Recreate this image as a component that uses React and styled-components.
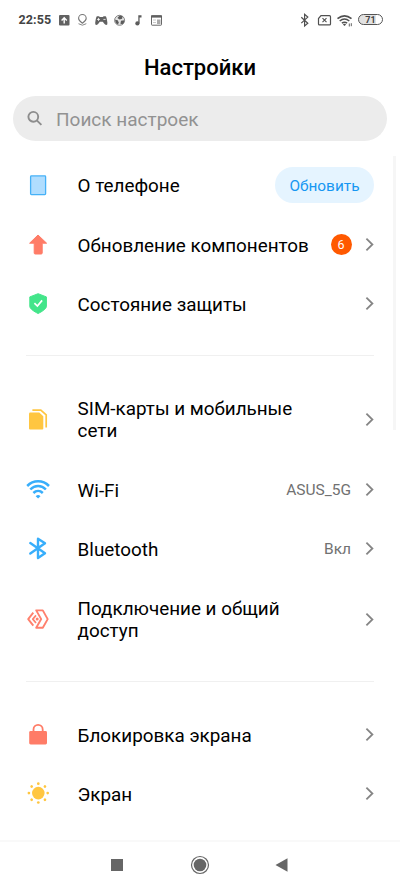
import React from 'react';
import styled, { createGlobalStyle } from 'styled-components';

const GlobalStyle = createGlobalStyle`
  * { box-sizing: border-box; }
  body { margin: 0; background: #fff; font-family: Roboto, sans-serif; color: #000; }
  svg { display: block; flex: none; }
`;

const Screen = styled.div`
  position: relative;
  display: flex;
  flex-direction: column;
  width: 400px;
  height: 889px;
  overflow: hidden;
  background: #fff;
`;

const StatusBar = styled.header`
  display: flex;
  align-items: center;
  justify-content: space-between;
  height: 39px;
  padding: 0 17px 0 18.5px;
  flex: none;
`;

const StatusGroup = styled.div`
  display: flex;
  align-items: center;
`;

const Clock = styled.span`
  width: 39.5px;
  font-size: 12.5px;
  font-weight: 700;
  line-height: 15px;
  letter-spacing: 0.1px;
  color: #444;
`;

const Battery = styled.span`
  display: flex;
  align-items: center;
  justify-content: center;
  width: 25px;
  height: 11px;
  margin-left: 5px;
  padding-top: 1px;
  border: 1px solid #555;
  border-radius: 6px;
  background: linear-gradient(90deg, #e2e2e2 72%, #fff 72%);
  font-size: 9px;
  font-weight: 700;
  line-height: 9px;
  color: #444;
`;

const Title = styled.h1`
  margin: 14px 0 0;
  height: 30px;
  font-size: 22px;
  font-weight: 500;
  line-height: 30px;
  text-align: center;
  flex: none;
`;

const SearchBar = styled.div`
  display: flex;
  align-items: center;
  height: 45px;
  margin: 13px 13px 15px;
  padding-left: 13px;
  gap: 13px;
  border-radius: 23px;
  background: #ececec;
  color: #929292;
  font-size: 19px;
  line-height: 24px;
  flex: none;
`;

const Placeholder = styled.span`
  padding-top: 2px;
`;

const Section = styled.section`
  display: flex;
  flex-direction: column;
  flex: none;
`;

const Divider = styled.div`
  height: 1px;
  margin: ${(p) => p.$before}px 26px ${(p) => p.$after}px;
  background: #f0f0f0;
  flex: none;
`;

const Row = styled.div`
  display: flex;
  align-items: center;
  height: ${(p) => p.$height || 59}px;
  padding: 0 26px 0 24px;
`;

const Label = styled.div`
  flex: 1;
  margin-left: 24.6px;
  padding-top: ${(p) => (p.$raised ? 1 : 2)}px;
  font-size: 18.85px;
  line-height: 22px;
  white-space: pre-line;
`;

const Value = styled.span`
  padding-top: 1px;
  margin-right: 14px;
  font-size: 15.5px;
  line-height: 20px;
  color: #717171;
`;

const Badge = styled.span`
  display: flex;
  align-items: center;
  justify-content: center;
  width: 21px;
  height: 21px;
  margin-right: 13.5px;
  border-radius: 50%;
  background: #ff5900;
  color: #fff;
  font-size: 12.5px;
`;

const UpdateButton = styled.button`
  width: 99px;
  height: 36px;
  margin-bottom: 1px;
  padding: 1px 0 0;
  border: 0;
  border-radius: 18px;
  background: #e5f4ff;
  color: #1697f2;
  font-family: inherit;
  font-size: 15.4px;
`;

const ScrollThumb = styled.div`
  position: absolute;
  top: 156px;
  right: 4px;
  width: 3px;
  height: 274px;
  background: #f6f6f6;
`;

const NavBar = styled.nav`
  display: flex;
  justify-content: center;
  align-items: center;
  gap: 62px;
  height: 49px;
  margin-top: auto;
  padding-bottom: 2px;
  border-top: 2px solid #f9f9f9;
  background: #fff;
  flex: none;
`;

const Chevron = () => (
  <svg width="9" height="15" viewBox="0 0 9 15" fill="none" stroke="#858585" strokeWidth="1.8">
    <path d="M1.4 1.6 7.4 7.5 1.4 13.4" />
  </svg>
);

const Icon = ({ children }) => (
  <svg width="29" height="29" viewBox="0 0 29 29" fill="none">{children}</svg>
);

const icons = {
  phone: (
    <Icon><rect x="6.6" y="4.9" width="15" height="18.7" rx="0.8" fill="#b0ddfe" stroke="#45b1f7" strokeWidth="1.3" /></Icon>
  ),
  update: (
    <Icon><path d="M14 5 22.6 13.2H18.2V23q0 1-1 1h-6q-1 0-1-1V13.2H5.6Z" fill="#ff7c67" stroke="#ff7c67" strokeWidth="1" strokeLinejoin="round" /></Icon>
  ),
  shield: (
    <Icon>
      <path d="M14.1 4.7 22.4 7.9v9.4c0 2.6-4.6 5.4-8.3 7.2-3.7-1.8-8.3-4.6-8.3-7.2V7.9Z" fill="#43e58a" stroke="#43e58a" strokeLinejoin="round" />
      <path d="m10.4 14.1 3 3 4.7-5.7" stroke="#fff" strokeWidth="1.7" />
    </Icon>
  ),
  sim: (
    <Icon>
      <path d="M5 8.700q0-1.200 1.200-1.200H15.300L19.300 11.300V23.500q0 1-1 1H6q-1 0-1-1Z" fill="#ffc641" />
      <path d="M8.400 5.100H16.800L22.200 9.900V22.500" stroke="#ffc641" strokeWidth="1.700" />
    </Icon>
  ),
  wifi: (
    <Icon>
      <g stroke="#38aefb" strokeWidth="2.500">
        <path d="M3.200 11C9.300 4.800 18.900 4.800 25 11" />
        <path d="M6.300 14.500c4.500-4.600 11.100-4.600 15.600 0" />
        <path d="M9.400 18c2.700-2.600 6.700-2.600 9.400 0" />
      </g>
      <path d="M11.700 21.200q2.400-2.200 4.800 0l-2.400 2.300Z" fill="#38aefb" />
    </Icon>
  ),
  bluetooth: (
    <Icon>
      <path d="M6.300 9.100 21 19.200 14 24V4.700l7 4.600L6.300 19.600" stroke="#38aefb" strokeWidth="2.400" strokeLinejoin="round" strokeLinecap="round" />
    </Icon>
  ),
  share: (
    <Icon>
      <g stroke="#ff806d" strokeWidth="1.900" strokeLinejoin="round">
        <path d="M12.200 5.400h6.600l4.900 8.700-4.900 8.600h-6.600l5-8.600Z" />
        <path d="M9.300 7.700 4.200 14.100l5.100 6.500" />
        <path d="m12 10.400-3.200 3.700 3.200 3.900" strokeWidth="1.700" />
      </g>
      <circle cx="13.200" cy="14.100" r="1.500" fill="#ff806d" />
    </Icon>
  ),
  lock: (
    <Icon>
      <rect x="5.200" y="11" width="17.800" height="13.500" rx="1.400" fill="#ff7c67" />
      <path d="M9.500 12.500V9.400a4.600 4.600 0 0 1 9.200 0v3.100" stroke="#ff7c67" strokeWidth="1.800" />
    </Icon>
  ),
  sun: (
    <Icon>
      <g fill="#ffc641">
        <circle cx="14.300" cy="14.100" r="6.300" />
        {[0, 45, 90, 135, 180, 225, 270, 315].map((a) => (
          <circle key={a} cx="14.300" cy="4.700" r="1.350" transform={`rotate(${a} 14.3 14.1)`} />
        ))}
      </g>
    </Icon>
  ),
};

const SettingRow = ({ icon, label, height, raised, children, arrow = true }) => (
  <Row $height={height}>
    {icons[icon]}
    <Label $raised={raised}>{label}</Label>
    {children}
    {arrow && <Chevron />}
  </Row>
);

const NotificationIcons = () => (
  <svg width="106" height="14" viewBox="58 12 106 14" fill="none">
    <rect x="59" y="14" width="10.5" height="10.5" rx="1" fill="#626262" />
    <path d="M64.2 22.5V17m-2.6 2.4 2.6-2.6 2.6 2.6" stroke="#fff" strokeWidth="1.4" />
    <path d="M82.4 22.2c-2.1-1.3-3.8-2.900-3.800-4.900a3.800 3.800 0 0 1 7.600 0c0 2-1.700 3.600-3.800 4.900Z" stroke="#777" strokeWidth="1.100" />
    <path d="M78.500 22.700q3.900 3 7.800 0" stroke="#888" />
    <path d="M97 15.200h2l.8.8h3l.8-.8h2q1.100.5 1.800 6.600.3 2.200-1.200 2.200-1 0-3.400-3.200h-3Q97.500 24 96.400 24q-1.500 0-1.200-2.200.7-6.100 1.800-6.600Z" fill="#626262" />
    <path d="M97 18.400h3m-1.500-1.500v3M103.400 18.400h2.200" stroke="#fff" strokeWidth=".8" />
    <circle cx="119.600" cy="19.300" r="5" fill="#e3e3e3" stroke="#858585" />
    <path d="m119.600 14.500 3 .7-.5 2.600-2.500.8-2.200-1.700ZM115 18.800l2.700.5 1.200 2.500-1.200 1.800q-2.500-1.400-2.700-4.800ZM121 19.800l3.400-.6q0 2.700-2 4.100l-2-.6Z" fill="#5c5c5c" />
    <path d="M138.300 22.400V14.200h3.200v2.300h-1.900v5.900Z" fill="#5c5c5c" />
    <circle cx="137.400" cy="22.400" r="2.100" fill="#5c5c5c" />
    <rect x="151.500" y="14.700" width="10" height="9.500" rx=".6" stroke="#686868" />
    <path d="M151 15.500h11" stroke="#606060" strokeWidth="2.200" />
    <path d="M153 19h3M153 21.500h3" stroke="#bbb" strokeWidth=".8" />
    <path d="M157 18.500h3.500v4.500H157Z" fill="#aaa" />
  </svg>
);

const ConnectivityIcons = () => (
  <svg width="53" height="16" viewBox="300 11 53 16" fill="none" stroke="#505050">
    <path d="m301.300 16.300 6.500 5.900-3.200 2.800V13.300l3.200 2.800-6.500 6" strokeWidth="1.200" />
    <path d="M321 14.700h8.500q1 0 1 1v7.200q0 1-1 1h-10q-1 0-1-1v-5.400Z" strokeWidth="1.200" />
    <path d="m322.500 17.200 4 4m0-4-4 4" strokeWidth="1.100" />
    <path d="M337.500 17.700q7-5.800 14 0M339.700 20q4.800-4 9.600 0M341.900 22.200q2.600-2 5.200 0" strokeWidth="1.600" />
    <path d="m342.900 23.400 1.600 1.600 1.600-1.600q-1.600-1.200-3.200 0Z" fill="#505050" stroke="none" />
    <path d="M349.300 22.500v3m2-3.300v3" strokeWidth=".9" />
  </svg>
);

export default function App() {
  return (
    <>
      <GlobalStyle />
      <Screen>
        <StatusBar>
          <StatusGroup>
            <Clock>22:55</Clock>
            <NotificationIcons />
          </StatusGroup>
          <StatusGroup>
            <ConnectivityIcons />
            <Battery>71</Battery>
          </StatusGroup>
        </StatusBar>
        <Title>Настройки</Title>
        <SearchBar>
          <svg width="17" height="17" viewBox="0 0 17 17" fill="none" stroke="#8d8d8d" strokeWidth="1.9">
            <circle cx="7.3" cy="6.8" r="4.9" />
            <path d="m10.8 10.4 4.6 4.5" />
          </svg>
          <Placeholder>Поиск настроек</Placeholder>
        </SearchBar>
        <Section>
          <SettingRow icon="phone" label="О телефоне" arrow={false} raised>
            <UpdateButton>Обновить</UpdateButton>
          </SettingRow>
          <SettingRow icon="update" label="Обновление компонентов">
            <Badge>6</Badge>
          </SettingRow>
          <SettingRow icon="shield" label="Состояние защиты" />
        </Section>
        <Divider $before={22} $after={22} />
        <Section>
          <SettingRow icon="sim" label={'SIM-карты и мобильные\nсети'} height={82} />
          <SettingRow icon="wifi" label="Wi-Fi"><Value>ASUS_5G</Value></SettingRow>
          <SettingRow icon="bluetooth" label="Bluetooth"><Value>Вкл</Value></SettingRow>
          <SettingRow icon="share" label={'Подключение и общий\nдоступ'} height={82} />
        </Section>
        <Divider $before={21} $after={23} />
        <Section>
          <SettingRow icon="lock" label="Блокировка экрана" />
          <SettingRow icon="sun" label="Экран" />
        </Section>
        <NavBar>
          <svg width="20" height="20" viewBox="0 0 20 20"><rect x="3" y="4" width="12" height="12" fill="#666" /></svg>
          <svg width="20" height="20" viewBox="0 0 20 20"><circle cx="10" cy="10" r="8.5" fill="none" stroke="#666" strokeWidth="1.2" /><circle cx="10" cy="10" r="6.3" fill="#666" /></svg>
          <svg width="20" height="20" viewBox="0 0 20 20"><path d="M15.5 3.300v13.400L3.500 10Z" fill="#666" /></svg>
        </NavBar>
        <ScrollThumb />
      </Screen>
    </>
  );
}
